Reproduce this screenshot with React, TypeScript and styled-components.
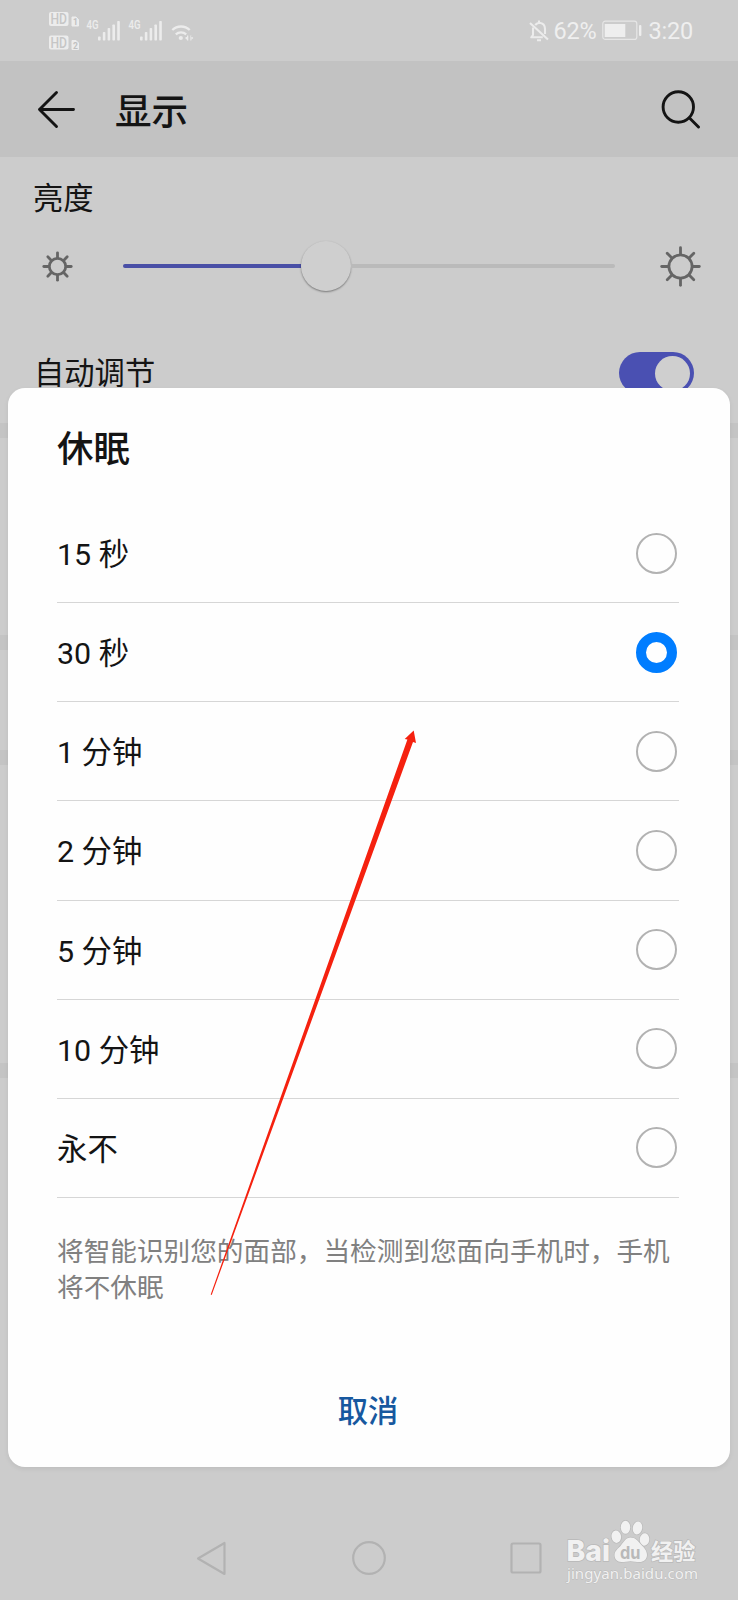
import React from 'react';
import styled, { createGlobalStyle } from 'styled-components';

const GlobalStyle = createGlobalStyle`
  * { box-sizing: border-box; }
  body {
    margin: 0;
    background: #cccccc;
    font-family: Roboto, "Noto Sans CJK SC", sans-serif;
    color: #141414;
  }
`;

const Screen = styled.div`
  position: relative;
  width: 738px;
  height: 1600px;
  overflow: hidden;
  background: #cccccc;
  display: flex;
  flex-direction: column;
`;

const StatusBar = styled.header`
  height: 61px;
  flex: none;
  display: flex;
  align-items: flex-start;
  justify-content: space-between;
  padding: 0 45px 0 48px;
`;

const StatusRight = styled.div`
  display: flex;
  align-items: center;
  height: 61px;
  color: #efefef;
  font-size: 23.5px;
  line-height: 61px;
`;

const Percent = styled.span`
  margin: 1px 6px 0 4px;
  letter-spacing: -0.2px;
`;

const Clock = styled.span`
  margin: 1px 0 0 6px;
  letter-spacing: -0.2px;
`;

const TitleBar = styled.div`
  height: 96px;
  flex: none;
  background: #c2c2c2;
  display: flex;
  align-items: center;
  padding: 0 37px 1px 36px;
`;

const PageTitle = styled.h1`
  flex: 1;
  margin: 0 0 0 39px;
  font-size: 36.6px;
  font-weight: 500;
  line-height: 50px;
  padding-top: 8px;
`;

const Panel = styled.section`
  flex: none;
  height: 266px;
  padding: 20px 0 0;
`;

const Label = styled.div`
  font-size: 30.3px;
  line-height: 44px;
`;

const BrightnessLabel = styled(Label)`
  padding-left: 33px;
`;

const SliderRow = styled.div`
  display: flex;
  align-items: center;
  height: 62px;
  margin-top: 14px;
  padding: 0 36px 0 41px;
  margin-bottom: 55px;
`;

const Track = styled.div`
  display: flex;
  align-items: center;
  width: 492px;
  margin: 0 44px 0 49px;
`;

const TrackFill = styled.div`
  width: 178px;
  height: 4px;
  border-radius: 2px 0 0 2px;
  background: #494fa6;
`;

const Thumb = styled.div`
  width: 50px;
  height: 50px;
  border-radius: 50%;
  background: #cfcfcf;
  box-shadow: 0 1px 2px rgba(0, 0, 0, 0.42);
`;

const TrackRest = styled.div`
  flex: 1;
  height: 4px;
  border-radius: 0 2px 2px 0;
  background: #bababa;
`;

const AutoRow = styled.div`
  display: flex;
  align-items: center;
  justify-content: space-between;
  padding: 0 44px 0 34px;
`;

const Switch = styled.div`
  width: 75px;
  height: 42px;
  border-radius: 21px;
  background: #4a50b2;
  display: flex;
  align-items: center;
  justify-content: flex-end;
  padding: 0 4px;
  margin-top: -2px;
`;

const Knob = styled.div`
  width: 35px;
  height: 35px;
  border-radius: 50%;
  background: #cfcfcf;
`;

const SectionGap = styled.div<{ $before?: number }>`
  flex: none;
  height: 15px;
  margin-top: ${(p) => p.$before ?? 0}px;
  background: #c4c4c4;
`;

const NavBar = styled.nav`
  flex: none;
  margin-top: auto;
  height: 84px;
  display: flex;
  justify-content: space-between;
  align-items: center;
  padding: 0 196px;
`;

const Dialog = styled.div`
  position: absolute;
  left: 8px;
  top: 388px;
  width: 722px;
  height: 1079px;
  border-radius: 17px;
  background: #fefefe;
  box-shadow: 0 2px 5px rgba(0, 0, 0, 0.07);
  padding: 37px 51px 0 49px;
  display: flex;
  flex-direction: column;
`;

const DialogTitle = styled.h2`
  margin: 0 0 29px;
  font-size: 36.6px;
  line-height: 50px;
  font-weight: 500;
`;

const Option = styled.div`
  height: 99.15px;
  flex: none;
  display: flex;
  align-items: center;
  justify-content: space-between;
  padding: 0 2px 0 0;
  border-bottom: 1px solid #d6d6d6;
  font-size: 30.4px;
  line-height: 44px;
`;

const OptionText = styled.span`
  padding-top: 4px;
`;

const Radio = styled.span<{ $on: boolean }>`
  width: 41px;
  height: 41px;
  border-radius: 50%;
  border: ${(p) => (p.$on ? '10px solid #007dff' : '2px solid #b2b2b2')};
`;

const Hint = styled.p`
  margin: 36px 0 0;
  font-size: 26.65px;
  line-height: 36px;
  color: #808080;
  white-space: nowrap;
`;

const Cancel = styled.button`
  margin: 84px 0 0;
  padding: 0;
  border: 0;
  background: none;
  align-self: center;
  font-family: inherit;
  font-size: 30.3px;
  line-height: 44px;
  font-weight: 500;
  color: #17589f;
`;

const ArrowMark = styled.svg`
  position: absolute;
  left: 200px;
  top: 720px;
`;

const Watermark = styled.svg`
  position: absolute;
  left: 555px;
  top: 1510px;
`;

const Signal = ({ x }: { x: number }) => (
  <g>
    <text x={x} y="29.3" fontSize="12.8" fontWeight="500" textLength="12" lengthAdjust="spacingAndGlyphs">4G</text>
    {[0, 1, 2, 3, 4].map((i) => (
      <rect key={i} x={x + 11.5 + i * 4.8} y={[36.5, 32, 28, 24.5, 21][i]} width="2.6" height={[4, 8.5, 12.5, 16, 19.5][i]} rx="0.8" />
    ))}
  </g>
);

const StatusIcons = () => (
  <svg width="150" height="61" viewBox="48 0 150 61" fill="#ececec" fontFamily="Roboto, sans-serif">
    {[19, 42.5].map((cy, i) => (
      <g key={cy}>
        <rect x="49" y={cy - 7} width="19.5" height="14" rx="2" />
        <text x="50.5" y={cy + 5} fontSize="14" fontWeight="500" fill="#c6c6c6" textLength="16.5" lengthAdjust="spacingAndGlyphs">HD</text>
        <path d={`M72 ${cy - 2}h4l2.5 2.5v6.5h-6.5z`} stroke="#ececec" strokeWidth="1" strokeLinejoin="round" />
        <text x="73" y={cy + 6} fontSize="8.5" fontWeight="700" fill="#c0c0c0">{i + 1}</text>
      </g>
    ))}
    <Signal x={86.5} />
    <Signal x={128.5} />
    <g fill="none" stroke="#ececec" strokeWidth="2.3">
      <path d="M172.3 30a12.5 12.5 0 0 1 17.4 0" />
      <path d="M175.8 34.3a8 8 0 0 1 10.4 0" />
    </g>
    <circle cx="180.8" cy="38" r="2.1" />
    <path d="M185 38l2.700-2.500v5zM193.300 38l-2.700-2.500v5zM187 35.500h1.300v5H187zM190 35.500h1.300v5H190z" />
  </svg>
);

const BellOff = () => (
  <svg width="20" height="24" viewBox="0 0 20 24" fill="none" stroke="#ececec" strokeWidth="2.1" strokeLinejoin="round">
    <path d="M1 4L19 20.500" />
    <path d="M6.200 6c1-1.300 2.200-2 4-2.300 3.900.3 5.800 3 5.800 6.300V15" />
    <path d="M4 8.500V16L2.300 18.300h11.500" />
    <path d="M10 1.500v2.500M8 21.300h4" />
  </svg>
);

const Battery = () => (
  <svg width="40" height="21" viewBox="0 0 40 21" fill="#eeeeee">
    <rect x="0.800" y="1.200" width="34" height="18.200" rx="2.500" fill="none" stroke="#e6e6e6" strokeWidth="1.200" />
    <rect x="2.700" y="4" width="20.600" height="13" />
    <rect x="37" y="5" width="2.400" height="11" rx="1" />
  </svg>
);

const Back = () => (
  <svg width="40" height="40" viewBox="0 0 40 40" fill="none" stroke="#141414" strokeWidth="2.900" strokeLinecap="round" strokeLinejoin="round">
    <path d="M37.500 20.500H3.500M20.500 3.500L3.500 20.500l17 17" />
  </svg>
);

const Search = () => (
  <svg width="41" height="40" viewBox="0 0 41 40" fill="none" stroke="#141414" strokeWidth="2.900" strokeLinecap="round">
    <circle cx="18.300" cy="18" r="15.200" />
    <path d="M29.500 29l9 9" />
  </svg>
);

const Sun = ({ size, r, inner, outer }: { size: number; r: number; inner: number; outer: number }) => (
  <svg width={size} height={size} viewBox={`${-size / 2} ${-size / 2} ${size} ${size}`} fill="none" stroke="#656565" strokeWidth="2.800" strokeLinecap="round">
    <circle r={r} />
    {[0, 45, 90, 135, 180, 225, 270, 315].map((a) => (
      <path key={a} d={`M0 ${-inner}V${-outer}`} transform={`rotate(${a})`} />
    ))}
  </svg>
);

const options = ['15 秒', '30 秒', '1 分钟', '2 分钟', '5 分钟', '10 分钟', '永不'];

export default function App() {
  return (
    <Screen>
      <GlobalStyle />
      <StatusBar>
        <StatusIcons />
        <StatusRight>
          <BellOff />
          <Percent>62%</Percent>
          <Battery />
          <Clock>3:20</Clock>
        </StatusRight>
      </StatusBar>
      <TitleBar>
        <Back />
        <PageTitle>显示</PageTitle>
        <Search />
      </TitleBar>
      <Panel>
        <BrightnessLabel>亮度</BrightnessLabel>
        <SliderRow>
          <Sun size={33} r={8.2} inner={9} outer={13.7} />
          <Track>
            <TrackFill />
            <Thumb />
            <TrackRest />
          </Track>
          <Sun size={43} r={11.6} inner={12.5} outer={18.8} />
        </SliderRow>
        <AutoRow>
          <Label>自动调节</Label>
          <Switch><Knob /></Switch>
        </AutoRow>
      </Panel>
      <SectionGap />
      <SectionGap $before={197} />
      <SectionGap $before={100} />
      <SectionGap $before={298} />
      <NavBar>
        <svg width="32" height="36" viewBox="0 0 32 36" fill="none" stroke="#b2b2b2" strokeWidth="2.200" strokeLinejoin="round">
          <path d="M28.500 3v31L2 18.500z" />
        </svg>
        <svg width="36" height="36" viewBox="0 0 36 36" fill="none" stroke="#b2b2b2" strokeWidth="2.200">
          <circle cx="18" cy="18" r="15.800" />
        </svg>
        <svg width="32" height="32" viewBox="0 0 32 32" fill="none" stroke="#b2b2b2" strokeWidth="2.200">
          <rect x="1.500" y="1.500" width="29" height="29" rx="1.500" />
        </svg>
      </NavBar>

      <Dialog>
        <DialogTitle>休眠</DialogTitle>
        {options.map((text, i) => (
          <Option key={text}>
            <OptionText>{text}</OptionText>
            <Radio $on={i === 1} />
          </Option>
        ))}
        <Hint>
          将智能识别您的面部，当检测到您面向手机时，手机
          <br />
          将不休眠
        </Hint>
        <Cancel>取消</Cancel>
      </Dialog>

      <ArrowMark width="230" height="585" viewBox="200 720 230 585" fill="#f5210f">
        <path d="M413.700 730.500L404.700 739l2.700 0.500L210.700 1294.500l1 0.400L413 742l3 1z" />
      </ArrowMark>

      <Watermark width="160" height="80" viewBox="555 1510 160 80" fill="#f1f1f1" stroke="#b8b8b8" strokeWidth="1.400" paintOrder="stroke">
        <text x="566.5" y="1561" fontFamily="Inter, sans-serif" fontWeight="800" fontSize="28.5" textLength="43.5" lengthAdjust="spacingAndGlyphs">Bai</text>
        <ellipse cx="616.300" cy="1536.700" rx="4.800" ry="6.200" transform="rotate(-8 616.300 1536.700)" />
        <ellipse cx="625.500" cy="1527.300" rx="4.700" ry="6.500" />
        <ellipse cx="637.500" cy="1528" rx="4.700" ry="6.500" transform="rotate(10 637.500 1528)" />
        <ellipse cx="644.500" cy="1539.500" rx="4.800" ry="6.200" transform="rotate(8 644.500 1539.500)" />
        <path d="M630.500 1537.500c5 0 7.500 3.500 10.500 7 3 3.200 6 6 6 10.500 0 4.500-3.500 7-7.500 7-3 0-6-.8-9-.8s-6 .8-9 .8c-4.500 0-7-3-7-7 0-4.200 4-6.500 6.500-9.700 2.500-3.300 5-7.800 9.500-7.800z" />
        <text x="620" y="1559" fontFamily="Inter, sans-serif" fontWeight="700" fontSize="18" fill="#b9b9b9" stroke="none" textLength="20.500" lengthAdjust="spacingAndGlyphs">du</text>
        <text x="651" y="1559.500" fontFamily="Noto Sans CJK SC, sans-serif" fontWeight="700" fontSize="22.500" textLength="44.500" lengthAdjust="spacingAndGlyphs">经验</text>
        <text x="567" y="1578.500" fontFamily="Noto Sans, sans-serif" fontSize="15" strokeWidth="0.800" textLength="131" lengthAdjust="spacing">jingyan.baidu.com</text>
      </Watermark>
    </Screen>
  );
}
